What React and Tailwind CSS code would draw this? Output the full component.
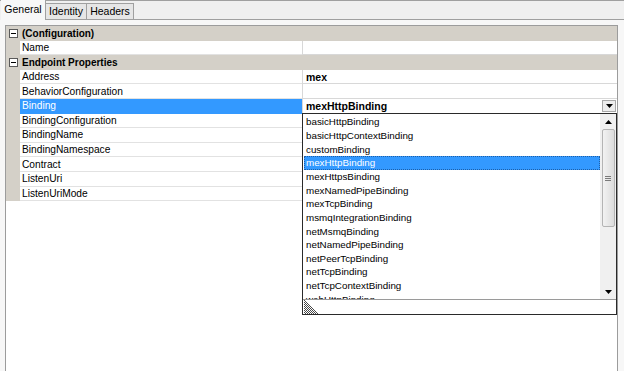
import React from 'react';

const font = "font-['Liberation_Sans',Arial,sans-serif]";

const props = [
  { label: 'Address', value: 'mex' },
  { label: 'BehaviorConfiguration', value: '' },
  { label: 'Binding', value: 'mexHttpBinding', selected: true },
  { label: 'BindingConfiguration', value: '' },
  { label: 'BindingName', value: '' },
  { label: 'BindingNamespace', value: '' },
  { label: 'Contract', value: '' },
  { label: 'ListenUri', value: '' },
  { label: 'ListenUriMode', value: '' },
];

const bindings = [
  'basicHttpBinding',
  'basicHttpContextBinding',
  'customBinding',
  'mexHttpBinding',
  'mexHttpsBinding',
  'mexNamedPipeBinding',
  'mexTcpBinding',
  'msmqIntegrationBinding',
  'netMsmqBinding',
  'netNamedPipeBinding',
  'netPeerTcpBinding',
  'netTcpBinding',
  'netTcpContextBinding',
  'webHttpBinding',
];

function MinusBox() {
  return (
    <svg width="9" height="9" viewBox="0 0 9 9">
      <rect x="0.5" y="0.5" width="8" height="8" fill="#fff" stroke="#5a5a5a" />
      <line x1="2" y1="4.5" x2="7" y2="4.5" stroke="#000" />
    </svg>
  );
}

function Arrow({ up }) {
  return (
    <svg width="7" height="4" viewBox="0 0 7 4">
      {up ? <polygon points="0,4 7,4 3.5,0" fill="#000" /> : <polygon points="0,0 7,0 3.5,4" fill="#000" />}
    </svg>
  );
}

function Category({ title }) {
  return (
    <div className="flex h-[14.6px] items-center bg-[#d4d0c8] pt-[1px]">
      <div className="w-[14px] flex justify-center">
        <MinusBox />
      </div>
      <span className="pl-[2px] text-[10px] font-bold leading-none">{title}</span>
    </div>
  );
}

function PropRow({ label, value, selected }) {
  return (
    <div className="flex h-[14.6px]">
      <div className="w-[14px] bg-[#d4d0c8]" />
      <div
        className={
          'w-[282px] flex items-center pl-[2px] pt-[1px] text-[10.2px] leading-none border-b ' +
          (selected ? 'bg-[#3399ff] text-white border-[#3399ff]' : 'border-[#e2e2e2]')
        }
      >
        {label}
      </div>
      <div className="flex-1 flex items-center justify-between pl-[3px] pt-[1px] border-l border-b border-[#d8d8d8] text-[10.5px] font-bold leading-none">
        <span>{value}</span>
        {selected && (
          <div className="w-[14px] h-[12px] mr-[1px] flex items-center justify-center border border-[#a8a8a8] bg-[#ededed]">
            <Arrow />
          </div>
        )}
      </div>
    </div>
  );
}

function Dropdown() {
  return (
    <div className="absolute left-[302px] top-[113px] w-[315px] h-[202px] border border-[#2a2a2a] bg-white flex flex-col">
      <div className="flex flex-1 min-h-0">
        <div className="flex-1 overflow-hidden pt-[1.5px] pl-[1px]">
          {bindings.map((b) => (
            <div
              key={b}
              className={
                'h-[13.65px] flex items-center pl-[1px] text-[9.8px] leading-none border ' +
                (b === 'mexHttpBinding' ? 'bg-[#3399ff] text-white border-dotted border-[#1d5fa8]' : 'border-transparent')
              }
            >
              {b}
            </div>
          ))}
        </div>
        <div className="w-[16px] bg-[#f0f0f0] flex flex-col items-center">
          <div className="h-[15px] flex items-center justify-center">
            <Arrow up />
          </div>
          <div className="w-[13px] h-[98px] rounded-[2px] border border-[#b4b4b4] bg-gradient-to-r from-[#f2f2f2] to-[#dcdcdc] flex items-center justify-center">
            <svg width="6" height="5" viewBox="0 0 6 5">
              <line x1="0" y1="0.5" x2="6" y2="0.5" stroke="#7a7a7a" />
              <line x1="0" y1="2.5" x2="6" y2="2.5" stroke="#7a7a7a" />
              <line x1="0" y1="4.5" x2="6" y2="4.5" stroke="#7a7a7a" />
            </svg>
          </div>
          <div className="flex-1" />
          <div className="h-[15px] flex items-center justify-center">
            <Arrow />
          </div>
        </div>
      </div>
      <div className="h-[15px] border-t border-[#9a9a9a] flex items-end">
        <svg width="15" height="14" viewBox="0 0 15 14" className="ml-[1px]">
          {[0, 2, 4, 6, 8, 10, 12].map((k) => (
            <line key={k} x1="0" y1={k} x2={14 - k} y2="14" stroke="#333" strokeWidth="0.9" />
          ))}
        </svg>
      </div>
    </div>
  );
}

export default function App() {
  return (
    <div className={'relative w-[624px] h-[371px] overflow-hidden bg-[#f0f0f0] text-black ' + font}>
      <div className="h-[20px] flex items-end border-t border-[#a0a0a0]">
        <div className="h-[20px] w-[45px] ml-[1px] flex items-center justify-center bg-[#f7f7f7] border-r border-[#a0a0a0] text-[10.5px]">
          General
        </div>
        <div className="h-[17px] w-[41px] flex items-center justify-center bg-[#e6e6e6] border-t border-r border-b border-[#a0a0a0] text-[10.5px]">
          Identity
        </div>
        <div className="h-[17px] w-[47px] flex items-center justify-center bg-[#e6e6e6] border-t border-r border-b border-[#a0a0a0] text-[10.5px]">
          Headers
        </div>
        <div className="flex-1 border-b border-[#a0a0a0]" />
      </div>
      <div className="h-[351px] bg-[#f7f7f7] pt-[5px] pl-[5px] pr-[6px]">
        <div className="h-full border-l border-t border-r border-[#9c9c9c] bg-white">
          <Category title="(Configuration)" />
          <PropRow label="Name" value="" />
          <Category title="Endpoint Properties" />
          {props.map((p) => (
            <PropRow key={p.label} {...p} />
          ))}
        </div>
      </div>
      <Dropdown />
    </div>
  );
}
